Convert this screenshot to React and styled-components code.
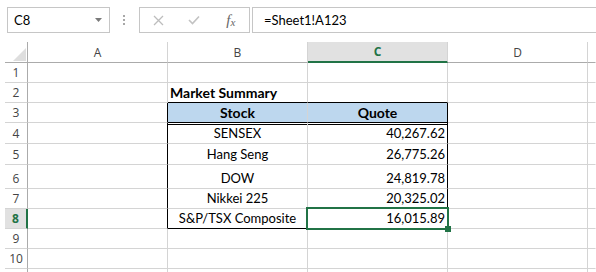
import React from 'react';
import styled, { createGlobalStyle, css } from 'styled-components';

const GRID = '#d4d4d4';
const HEAD_LINE = '#ababab';
const GREEN = '#217346';
const BLUE = '#bdd7ee';
const CELL_FONT = 'Lato, "Liberation Sans", sans-serif';
const UI_FONT = '"Open Sans", "Noto Sans", sans-serif';

const Global = createGlobalStyle`
  html, body { margin: 0; padding: 0; background: #fff; }
  body { width: 596px; height: 272px; overflow: hidden; }
`;

const Page = styled.div`
  width: 596px;
  height: 272px;
  overflow: hidden;
  background: #fff;
  display: flex;
  flex-direction: column;
`;

const FormulaBar = styled.div`
  height: 42px;
  flex: none;
  box-sizing: border-box;
  display: flex;
  align-items: flex-start;
  padding: 7px 0 0 7px;
  overflow: hidden;
`;

const NameBox = styled.div`
  width: 103px;
  height: 26px;
  flex: none;
  box-sizing: border-box;
  border: 1px solid #c6c6c6;
  display: flex;
  align-items: center;
  justify-content: space-between;
  padding: 0 7px 0 6px;
  font-family: ${CELL_FONT};
  font-size: 13px;
  color: #000;
`;

const Dots = styled.div`
  flex: none;
  display: flex;
  flex-direction: column;
  gap: 2px;
  margin: 8px 0 0 13px;
`;

const Dot = styled.span`
  width: 2px;
  height: 2px;
  background: #a8a8a8;
`;

const FxButtons = styled.div`
  flex: none;
  width: 111px;
  height: 26px;
  margin-left: 14px;
  box-sizing: border-box;
  border: 1px solid #c6c6c6;
  display: grid;
  grid-template-columns: repeat(3, 1fr);
  align-items: center;
  justify-items: center;
`;

const FxLabel = styled.span`
  font-family: "Liberation Serif", serif;
  font-style: italic;
  font-size: 15px;
  color: #666;
  line-height: 1;
  & > sub {
    font-size: 11px;
    vertical-align: baseline;
    position: relative;
    top: 1px;
  }
`;

const FormulaInput = styled.div`
  flex: 1;
  height: 26px;
  margin: 0 -6px 0 2px;
  box-sizing: border-box;
  border: 1px solid #c6c6c6;
  display: flex;
  align-items: center;
  padding-left: 11px;
  font-family: ${CELL_FONT};
  font-size: 13px;
  color: #000;
`;

const Sheet = styled.div`
  display: grid;
  grid-template-columns: 23px repeat(4, 140px) 1fr;
  grid-template-rows: 21px 20px 20px 20px 21px 21px 24px 20px 20px 20px 20px 20px;
  margin-left: 5px;
`;

const Corner = styled.div`
  box-sizing: border-box;
  border-right: 1px solid ${HEAD_LINE};
  border-bottom: 1px solid ${HEAD_LINE};
  display: flex;
  align-items: flex-end;
  justify-content: flex-end;
  padding: 0 1px 1px 0;
`;

const ColHead = styled.div`
  box-sizing: border-box;
  border-right: 1px solid ${p => (p.$last ? 'transparent' : GRID)};
  border-bottom: 1px solid ${HEAD_LINE};
  display: flex;
  align-items: center;
  justify-content: center;
  font-family: ${UI_FONT};
  font-size: 12px;
  color: #444;
  ${p =>
    p.$active &&
    css`
      background: #e1e1e1;
      color: ${GREEN};
      font-weight: 700;
      border-bottom: 2px solid ${GREEN};
    `}
`;

const RowHead = styled.div`
  box-sizing: border-box;
  border-right: 1px solid ${HEAD_LINE};
  border-bottom: 1px solid ${GRID};
  display: flex;
  align-items: flex-end;
  justify-content: center;
  padding-bottom: 1px;
  font-family: ${UI_FONT};
  font-size: 12px;
  line-height: 17px;
  color: #444;
  ${p =>
    p.$active &&
    css`
      background: #e1e1e1;
      color: ${GREEN};
      font-weight: 700;
      border-right: 2px solid ${GREEN};
    `}
`;

const Cell = styled.div`
  box-sizing: border-box;
  position: relative;
  min-width: 0;
  border-right: 1px solid ${p => p.$right || GRID};
  border-bottom: 1px solid ${p => p.$bottom || GRID};
  background-color: ${p => p.$bg || '#fff'};
  display: flex;
  align-items: flex-end;
  justify-content: ${p =>
    p.$align === 'right' ? 'flex-end' : p.$align === 'center' ? 'center' : 'flex-start'};
  padding: 0 2px 1px 2px;
  font-family: ${CELL_FONT};
  font-size: ${p => (p.$bold ? '14px' : '13px')};
  line-height: 17px;
  font-weight: ${p => (p.$bold ? 700 : 400)};
  color: #000;
  white-space: nowrap;
  ${p => p.$last && css`border-right-color: transparent;`}
  ${p =>
    p.$doubleTop &&
    css`
      background-image: linear-gradient(#000, #000);
      background-size: 100% 1px;
      background-position: 0 1px;
      background-repeat: no-repeat;
    `}
`;

const Selection = styled.span`
  position: absolute;
  inset: -2px;
  border: 2px solid ${GREEN};
  z-index: 2;
  pointer-events: none;
`;

const Handle = styled.span`
  position: absolute;
  right: -4px;
  bottom: -4px;
  width: 6px;
  height: 6px;
  background: ${GREEN};
  z-index: 3;
`;

const Caret = () => (
  <svg width="7" height="4" viewBox="0 0 7 4">
    <polygon points="0,0 7,0 3.5,4" fill="#7a7a7a" />
  </svg>
);

const CancelIcon = () => (
  <svg width="11" height="11" viewBox="0 0 11 11">
    <path d="M1 1 L10 10 M10 1 L1 10" stroke="#bdbdbd" strokeWidth="1.3" fill="none" />
  </svg>
);

const EnterIcon = () => (
  <svg width="12" height="10" viewBox="0 0 12 10">
    <path d="M1 5 L4.5 8.5 L11 1.5" stroke="#c2c2c2" strokeWidth="1.6" fill="none" />
  </svg>
);

const CornerTriangle = () => (
  <svg width="13" height="13" viewBox="0 0 13 13">
    <polygon points="13,0 13,13 0,13" fill="#dedede" />
  </svg>
);

const B = '#000';

const rows = [
  { n: 1, cells: [{}, {}, {}, {}] },
  {
    n: 2,
    cells: [{}, { text: 'Market Summary', bold: true, bottom: B }, { bottom: B }, {}],
  },
  {
    n: 3,
    cells: [
      { right: B },
      { text: 'Stock', bold: true, align: 'center', bg: BLUE, bottom: B },
      { text: 'Quote', bold: true, align: 'center', bg: BLUE, bottom: B, right: B },
      {},
    ],
  },
  {
    n: 4,
    cells: [
      { right: B },
      { text: 'SENSEX', align: 'center', doubleTop: true },
      { text: '40,267.62', align: 'right', doubleTop: true, right: B },
      {},
    ],
  },
  {
    n: 5,
    cells: [
      { right: B },
      { text: 'Hang Seng', align: 'center' },
      { text: '26,775.26', align: 'right', right: B },
      {},
    ],
  },
  {
    n: 6,
    cells: [
      { right: B },
      { text: 'DOW', align: 'center' },
      { text: '24,819.78', align: 'right', right: B },
      {},
    ],
  },
  {
    n: 7,
    cells: [
      { right: B },
      { text: 'Nikkei 225', align: 'center' },
      { text: '20,325.02', align: 'right', right: B },
      {},
    ],
  },
  {
    n: 8,
    active: true,
    cells: [
      { right: B },
      { text: 'S&P/TSX Composite', align: 'center', bottom: B },
      { text: '16,015.89', align: 'right', bottom: B, right: B, selected: true },
      {},
    ],
  },
  { n: 9, cells: [{}, {}, {}, {}] },
  { n: 10, cells: [{}, {}, {}, {}] },
  { n: 11, hideLabel: true, cells: [{}, {}, {}, {}] },
];

const columns = ['A', 'B', 'C', 'D'];

export default function App() {
  return (
    <Page>
      <Global />
      <FormulaBar>
        <NameBox>
          <span>C8</span>
          <Caret />
        </NameBox>
        <Dots>
          <Dot />
          <Dot />
          <Dot />
        </Dots>
        <FxButtons>
          <CancelIcon />
          <EnterIcon />
          <FxLabel>
            f<sub>x</sub>
          </FxLabel>
        </FxButtons>
        <FormulaInput>=Sheet1!A123</FormulaInput>
      </FormulaBar>
      <Sheet>
        <Corner>
          <CornerTriangle />
        </Corner>
        {columns.map(c => (
          <ColHead key={c} $active={c === 'C'}>
            {c}
          </ColHead>
        ))}
        <ColHead $last />
        {rows.map(r => (
          <React.Fragment key={r.n}>
            <RowHead $active={r.active}>{r.hideLabel ? null : r.n}</RowHead>
            {r.cells.map((c, i) => (
              <Cell
                key={i}
                $bold={c.bold}
                $align={c.align}
                $bg={c.bg}
                $bottom={c.bottom}
                $right={c.right}
                $doubleTop={c.doubleTop}
              >
                {c.text}
                {c.selected && (
                  <>
                    <Selection />
                    <Handle />
                  </>
                )}
              </Cell>
            ))}
            <Cell $last />
          </React.Fragment>
        ))}
      </Sheet>
    </Page>
  );
}
